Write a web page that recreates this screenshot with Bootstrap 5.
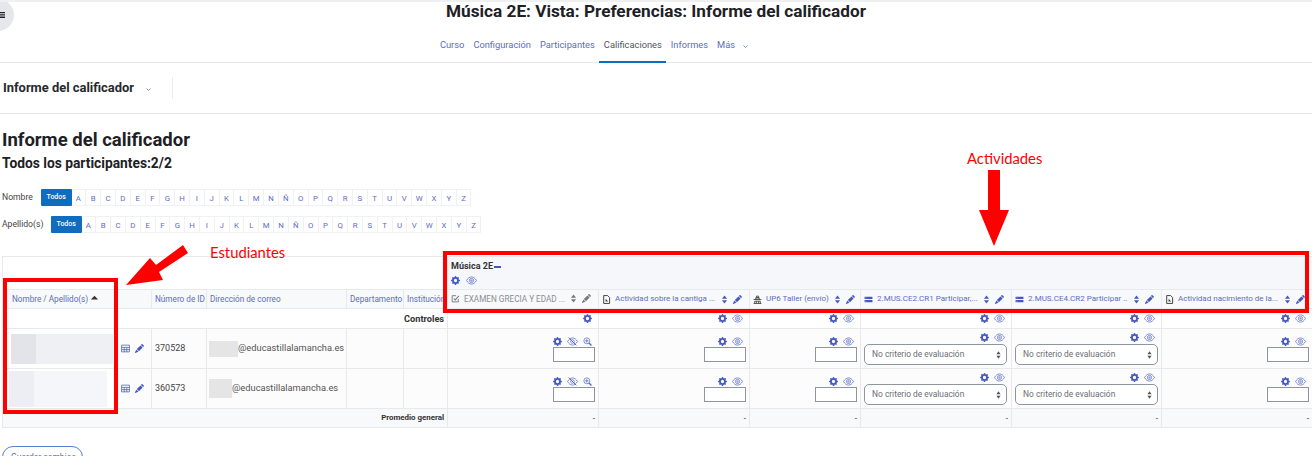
<!DOCTYPE html>
<html lang="es">
<head>
<meta charset="utf-8">
<title>Informe del calificador</title>
<link href="https://cdn.jsdelivr.net/npm/bootstrap@5.3.0/dist/css/bootstrap.min.css" rel="stylesheet">
<style>
html,body{height:456px;overflow:hidden;background:#fff}
body{font-family:Roboto,"Liberation Sans",sans-serif;color:#1d2125;border-top:2px solid #eef0f2;position:relative}
a{text-decoration:none;color:#5b6cc6}
.ic{width:9px;height:9px;fill:#4358bf;flex:none;display:block}
.ic.gy{fill:#777}
.ic.ln{fill:none;stroke:#5468c4;stroke-width:1.3}
.ic.ls{width:11px}
.menu-dot{position:absolute;left:-18px;top:-3px;width:32px;height:32px;border-radius:50%;background:#e6e7ea}
.menu-bars{position:absolute;left:0;top:10px;width:5px;height:6px;fill:#222}
.top-title{height:34px;font-size:17.2px;font-weight:700;line-height:19px;margin:0}
.tabs-wrap{height:27px;border-bottom:1px solid #e6e8ea;font-size:9px}
.tabs-wrap .nav{padding-right:124px}
.tabs-wrap .nav-link{padding:0 4.5px;height:27px;line-height:18px;color:#5b6cc6;font-size:9.3px;border-bottom:2px solid transparent;margin:0}
.tabs-wrap .nav-link.active{color:#4f5660;border-bottom-color:#0f6cbf;padding:0 4.5px}
.chev{width:5px;height:5px;stroke:#5b6cc6;fill:none;stroke-width:1.6;margin-left:8px}
.tert{height:51px;border-bottom:1px solid #e6e8ea;padding-left:3px}
.tert-t{font-size:12.9px;font-weight:700;color:#26292c}
.tert-c{width:5px;height:5px;stroke:#5b6cc6;fill:none;stroke-width:1.6;margin:2px 0 0 12px}
.tert-d{width:1px;height:22px;background:#e9ebee;margin-left:21px}
.head-a{font-size:18.5px;font-weight:700;line-height:22px;margin:15px 0 0 2px}
.head-b{font-size:13.8px;font-weight:700;line-height:16px;margin:4px 0 0 2px}
.ini{height:17px;margin-left:2px;font-size:8.6px;color:#444}
.ini-1{margin-top:18px}
.ini-2{margin-top:10px}
.ini-l{width:39px}
.ini-w{width:49px}
.ini a{display:block;width:14.82px;height:17px;line-height:17px;text-align:center;font-size:7.8px;border:1px solid #f0f1f3;border-left:0;color:#5b6cc6}
.ini a.on{width:30.5px;background:#0f6cbf;color:#fff;border:0;border-radius:1px;font-weight:500;font-size:7px}
.gr{width:1310px;margin:23px 0 0 2px;table-layout:fixed;border-collapse:collapse;font-size:8.2px;color:#444}
.gr td,.gr th{border:1px solid #e8e9eb;padding:0 3px;font-weight:400;vertical-align:middle;background:#fff;white-space:nowrap;overflow:hidden}
.r-top{height:33px}.r-hd{height:19px}.r-ct{height:20px}.r-st{height:40px}.r-av{height:19px}
.gr .r-top .cat{background:#f6f7fb;padding:0 0 0 3px;vertical-align:top}
.cat-t{font-size:9px;font-weight:700;color:#333;line-height:11px;margin-top:4px;display:flex;align-items:center;gap:1px}
.cat-m{width:7px;height:2px;background:#4358bf}
.cat-i{margin-top:4px;gap:6px}
.gr .r-hd td,.gr .r-hd th{background:#f8f9fa}
.gr .r-st td,.gr .r-st th{background:#fcfcfc}
.gr .r-st .who{background:#fff;padding:0}
.gr .r-av td,.gr .r-av th{background:#f8f9fa}
.fl{display:flex;align-items:center;gap:4px;padding-right:4px;font-size:8px}
.fl a{overflow:hidden;flex:1 1 auto;min-width:0}
.fl-n{font-size:8.2px;padding:0 0 0 6px;gap:2px}
.fl-n a{flex:0 0 auto}
.fl-u{padding-right:2px}
.mut{color:#8a8d92;flex:1 1 auto;font-size:8.2px}
.ctl{font-weight:700!important;font-size:9.2px;color:#333!important}
.avg{font-weight:700!important;font-size:7.9px;color:#333!important}
.icons{display:flex;justify-content:flex-end;gap:5px;height:11px;align-items:center;padding-right:3px}
.tools{display:flex;gap:5px}
.num{font-size:9px;color:#444}
.mail{font-size:9.3px;color:#555;padding-left:2px!important}
.blk{display:inline-block;vertical-align:middle;background:#e5e5e5}
.blk-a{width:29px;height:16px}.blk-b{width:23px;height:19px}
.nm{display:flex;margin-left:8px}
.nm span:first-child{background:#e2e4e9}
.nm span:last-child{background:#eef0f4}
.nm-a{height:30px}.nm-a span:first-child{width:25px}.nm-a span:last-child{width:77px}
.nm-b{height:36px;margin-left:6px}.nm-b span:first-child{width:25px;background:#edeef3}.nm-b span:last-child{width:73px;background:#f5f6fa}
.inbox{display:block;margin:0 0 0 auto;width:42px;height:15px;border:1px solid #8f959e;background:#fff;padding:0;border-radius:0}
.pick{height:21px;min-height:0;font-size:8.4px;padding:0 0 0 7px;border:1px solid #8f959e;border-radius:5px;color:#6a6e73;width:143px;margin-top:1px;background-size:5px 8px;background-position:right 5px center;background-image:url("data:image/svg+xml,%3Csvg xmlns='http://www.w3.org/2000/svg' viewBox='0 0 6 9'%3E%3Cpath fill='%23555' d='M3 0l2.5 3.5h-5zM3 9L.5 5.5h5z'/%3E%3C/svg%3E")}
.go{margin:18px 0 0 2px;font-size:8.5px;padding:3px 8px;height:22px;line-height:14px;border:1px solid #5b7fc6;color:#5b6cc6;border-radius:11px;width:81px;white-space:nowrap;background:#fff}
.redbox{position:absolute;border:4px solid #f00;pointer-events:none}
.rb-a{left:3px;top:276px;width:115px;height:136px}
.rb-b{left:443px;top:249px;width:866px;height:62px}
.arrows{position:absolute;left:0;top:-2px;width:1312px;height:456px;pointer-events:none;fill:#f00}
.tag{position:absolute;color:#f00;font-family:Lato,"Liberation Sans",sans-serif;font-size:14.8px;line-height:18px}
.tg-a{left:967px;top:147px}
.tg-b{left:210px;top:241px}
</style>
</head>
<body>
<svg width="0" height="0" class="position-absolute">
<defs>
<symbol id="gear" viewBox="0 0 16 16"><path d="M9.405 1.05c-.413-1.4-2.397-1.4-2.81 0l-.1.34a1.464 1.464 0 0 1-2.105.872l-.31-.17c-1.283-.698-2.686.705-1.987 1.987l.169.311c.446.82.023 1.841-.872 2.105l-.34.1c-1.4.413-1.4 2.397 0 2.81l.34.1a1.464 1.464 0 0 1 .872 2.105l-.17.31c-.698 1.283.705 2.686 1.987 1.987l.311-.169a1.464 1.464 0 0 1 2.105.872l.1.34c.413 1.4 2.397 1.4 2.81 0l.1-.34a1.464 1.464 0 0 1 2.105-.872l.31.17c1.283.698 2.686-.705 1.987-1.987l-.169-.311a1.464 1.464 0 0 1 .872-2.105l.34-.1c1.4-.413 1.4-2.397 0-2.81l-.34-.1a1.464 1.464 0 0 1-.872-2.105l.17-.31c.698-1.283-.705-2.686-1.987-1.987l-.311.169a1.464 1.464 0 0 1-2.105-.872l-.1-.34zM8 10.93a2.929 2.929 0 1 1 0-5.86 2.929 2.929 0 0 1 0 5.858z"/></symbol>
<symbol id="eye" viewBox="0 0 20 16"><path d="M1 8c2.500-4.500 5.500-6.500 9-6.500s6.500 2 9 6.500c-2.500 4.500-5.500 6.500-9 6.500S3.500 12.500 1 8z"/><circle cx="10" cy="8" r="3.800"/><circle cx="10" cy="8" r="1.200"/></symbol>
<symbol id="eyeoff" viewBox="0 0 20 16"><path d="M1 8c2.500-4.500 5.500-6.500 9-6.500s6.500 2 9 6.500c-2.500 4.500-5.500 6.500-9 6.500S3.500 12.500 1 8z"/><circle cx="10" cy="8" r="3.300"/><path d="M3 1l14 14" stroke-width="1.800"/></symbol>
<symbol id="zoomin" viewBox="0 0 16 16"><circle cx="6.800" cy="6.800" r="5.300"/><path d="M10.700 10.700L15 15" stroke-width="2.400"/><path d="M4 6.800h5.600M6.800 4v5.600" stroke-width="1.500"/></symbol>
<symbol id="pen" viewBox="0 0 16 16"><path d="M12.854.146a.5.5 0 0 0-.707 0L10.500 1.793 14.207 5.500l1.647-1.646a.5.5 0 0 0 0-.708l-3-3zm.646 6.061L9.793 2.500 3.293 9H3.500a.5.5 0 0 1 .5.500v.500h.500a.5.5 0 0 1 .5.500v.500h.500a.5.5 0 0 1 .5.500v.500h.500a.5.5 0 0 1 .5.500v.207l6.500-6.500zm-7.468 7.468A.5.5 0 0 1 6 13.500V13h-.500a.5.5 0 0 1-.5-.500V12h-.500a.5.5 0 0 1-.5-.500V11h-.500a.5.5 0 0 1-.5-.500V10h-.500a.499.499 0 0 1-.175-.032l-.179.178a.5.5 0 0 0-.11.168l-2 5a.5.5 0 0 0 .65.65l5-2a.5.5 0 0 0 .168-.11l.178-.178z"/></symbol>
<symbol id="sort" viewBox="0 0 10 16"><path d="M5 1l4.500 5.500h-9zM5 15L.5 9.500h9z"/></symbol>
<symbol id="grid" viewBox="0 0 16 16"><path d="M1 2h14v12H1zM1 6h14M1 10h14M5.700 6v8M10.300 6v8" fill="none" stroke="#4358bf" stroke-width="1.300"/></symbol>
<symbol id="quiz" viewBox="0 0 16 16"><path d="M13 9v5H2V3h7" fill="none" stroke="#777" stroke-width="1.600"/><path d="M5 8l2.500 2.500L14 3.500" fill="none" stroke="#777" stroke-width="1.800"/></symbol>
<symbol id="file" viewBox="0 0 16 16"><path d="M3 1h7l3.500 3.500V15H3z" fill="none" stroke="#333" stroke-width="1.600"/><path d="M6.500 6.500v6l1.800-1.500 3 1z" fill="#333"/></symbol>
<symbol id="work" viewBox="0 0 16 16"><path d="M1 15h14M3 15v-4h10v4M1 8h14M5 8V5h6v3M6 2h4v3H6zM6 11v4M10 11v4" fill="none" stroke="#333" stroke-width="1.400"/></symbol>
<symbol id="srv" viewBox="0 0 16 16"><path d="M1 3h14v4.300H1zM1 8.700h14V13H1z" fill="#4358bf"/><circle cx="3.500" cy="5.100" r=".8" fill="#fff"/><circle cx="3.500" cy="10.900" r=".8" fill="#fff"/></symbol>
</defs>
</svg>

<div class="menu-dot"></div>
<svg class="menu-bars" viewBox="0 0 5 6"><path d="M0 0h5v1H0zM0 1.700h5v1H0zM0 3.400h5v1H0zM0 5h5v1H0z"/></svg>

<h1 class="top-title text-center">Música 2E: Vista: Preferencias: Informe del calificador</h1>
<div class="tabs-wrap">
<ul class="nav justify-content-center">
<li class="nav-item"><a class="nav-link" href="#">Curso</a></li>
<li class="nav-item"><a class="nav-link" href="#">Configuración</a></li>
<li class="nav-item"><a class="nav-link" href="#">Participantes</a></li>
<li class="nav-item"><a class="nav-link active" href="#">Calificaciones</a></li>
<li class="nav-item"><a class="nav-link" href="#">Informes</a></li>
<li class="nav-item"><a class="nav-link d-flex align-items-start" href="#">Más<svg class="chev mt-2" viewBox="0 0 10 10"><path d="M1 3l4 4 4-4"/></svg></a></li>
</ul>
</div>
<div class="tert d-flex align-items-center">
<span class="tert-t">Informe del calificador</span>
<svg class="tert-c" viewBox="0 0 10 10"><path d="M1 3l4 4 4-4"/></svg>
<span class="tert-d"></span>
</div>
<h2 class="head-a">Informe del calificador</h2>
<h3 class="head-b">Todos los participantes:2/2</h3>

<div class="ini ini-1 d-flex align-items-center"><span class="ini-l">Nombre</span><a class="on" href="#">Todos</a><a href="#">A</a><a href="#">B</a><a href="#">C</a><a href="#">D</a><a href="#">E</a><a href="#">F</a><a href="#">G</a><a href="#">H</a><a href="#">I</a><a href="#">J</a><a href="#">K</a><a href="#">L</a><a href="#">M</a><a href="#">N</a><a href="#">Ñ</a><a href="#">O</a><a href="#">P</a><a href="#">Q</a><a href="#">R</a><a href="#">S</a><a href="#">T</a><a href="#">U</a><a href="#">V</a><a href="#">W</a><a href="#">X</a><a href="#">Y</a><a href="#">Z</a></div>
<div class="ini ini-2 d-flex align-items-center"><span class="ini-w">Apellido(s)</span><a class="on" href="#">Todos</a><a href="#">A</a><a href="#">B</a><a href="#">C</a><a href="#">D</a><a href="#">E</a><a href="#">F</a><a href="#">G</a><a href="#">H</a><a href="#">I</a><a href="#">J</a><a href="#">K</a><a href="#">L</a><a href="#">M</a><a href="#">N</a><a href="#">Ñ</a><a href="#">O</a><a href="#">P</a><a href="#">Q</a><a href="#">R</a><a href="#">S</a><a href="#">T</a><a href="#">U</a><a href="#">V</a><a href="#">W</a><a href="#">X</a><a href="#">Y</a><a href="#">Z</a></div>

<table class="gr">
<colgroup><col width="115"><col width="34"><col width="55"><col width="140"><col width="57"><col width="44"><col width="151"><col width="151"><col width="111"><col width="151"><col width="150"><col width="151"></colgroup>
<tr class="r-top"><td colspan="6"></td><td colspan="6" class="cat"><div class="cat-t">Música 2E<span class="cat-m"></span></div><div class="d-flex cat-i"><svg class="ic"><use href="#gear"/></svg><svg class="ic ln ls"><use href="#eye"/></svg></div></td></tr>
<tr class="r-hd">
<th><div class="fl fl-n"><a href="#">Nombre / Apellido(s)</a><svg class="ic" viewBox="0 0 10 10"><path d="M5 2l4 4H1z" fill="#333"/></svg></div></th><th></th><th><a href="#">Número de ID</a></th><th><a href="#">Dirección de correo</a></th><th><a href="#">Departamento</a></th><th><a href="#">Institución</a></th>
<th><div class="fl"><svg class="ic"><use href="#quiz"/></svg><span class="mut">EXAMEN GRECIA Y EDAD ...</span><svg class="ic gy"><use href="#sort"/></svg><svg class="ic gy"><use href="#pen"/></svg></div></th>
<th><div class="fl"><svg class="ic"><use href="#file"/></svg><a href="#">Actividad sobre la cantiga ...</a><svg class="ic"><use href="#sort"/></svg><svg class="ic"><use href="#pen"/></svg></div></th>
<th><div class="fl fl-u"><svg class="ic"><use href="#work"/></svg><a href="#">UP6 Taller (envío)</a><svg class="ic"><use href="#sort"/></svg><svg class="ic"><use href="#pen"/></svg></div></th>
<th><div class="fl"><svg class="ic"><use href="#srv"/></svg><a href="#">2.MUS.CE2.CR1 Participar,...</a><svg class="ic"><use href="#sort"/></svg><svg class="ic"><use href="#pen"/></svg></div></th>
<th><div class="fl"><svg class="ic"><use href="#srv"/></svg><a href="#">2.MUS.CE4.CR2 Participar ...</a><svg class="ic"><use href="#sort"/></svg><svg class="ic"><use href="#pen"/></svg></div></th>
<th><div class="fl"><svg class="ic"><use href="#file"/></svg><a href="#">Actividad nacimiento de la...</a><svg class="ic"><use href="#sort"/></svg><svg class="ic"><use href="#pen"/></svg></div></th>
</tr>
<tr class="r-ct"><td colspan="6" class="text-end ctl">Controles</td>
<td><div class="icons"><svg class="ic"><use href="#gear"/></svg></div></td>
<td><div class="icons"><svg class="ic"><use href="#gear"/></svg><svg class="ic ln ls"><use href="#eye"/></svg></div></td>
<td><div class="icons"><svg class="ic"><use href="#gear"/></svg><svg class="ic ln ls"><use href="#eye"/></svg></div></td>
<td><div class="icons"><svg class="ic"><use href="#gear"/></svg><svg class="ic ln ls"><use href="#eye"/></svg></div></td>
<td><div class="icons"><svg class="ic"><use href="#gear"/></svg><svg class="ic ln ls"><use href="#eye"/></svg></div></td>
<td><div class="icons"><svg class="ic"><use href="#gear"/></svg><svg class="ic ln ls"><use href="#eye"/></svg></div></td>
</tr>
<tr class="r-st">
<td class="who"><div class="nm nm-a"><span></span><span></span></div></td>
<td><div class="tools"><svg class="ic"><use href="#grid"/></svg><svg class="ic"><use href="#pen"/></svg></div></td>
<td class="num">370528</td><td class="mail"><span class="blk blk-a"></span>@educastillalamancha.es</td><td></td><td></td>
<td><div class="icons"><svg class="ic"><use href="#gear"/></svg><svg class="ic ln ls"><use href="#eyeoff"/></svg><svg class="ic ln"><use href="#zoomin"/></svg></div><input class="inbox" type="text" aria-label="Nota"></td>
<td><div class="icons"><svg class="ic"><use href="#gear"/></svg><svg class="ic ln ls"><use href="#eye"/></svg></div><input class="inbox" type="text" aria-label="Nota"></td>
<td><div class="icons"><svg class="ic"><use href="#gear"/></svg><svg class="ic ln ls"><use href="#eye"/></svg></div><input class="inbox" type="text" aria-label="Nota"></td>
<td><div class="icons"><svg class="ic"><use href="#gear"/></svg><svg class="ic ln ls"><use href="#eye"/></svg></div><select class="form-select pick" aria-label="Criterio"><option>No criterio de evaluación</option></select></td>
<td><div class="icons"><svg class="ic"><use href="#gear"/></svg><svg class="ic ln ls"><use href="#eye"/></svg></div><select class="form-select pick" aria-label="Criterio"><option>No criterio de evaluación</option></select></td>
<td><div class="icons"><svg class="ic"><use href="#gear"/></svg><svg class="ic ln ls"><use href="#eye"/></svg></div><input class="inbox" type="text" aria-label="Nota"></td>
</tr>
<tr class="r-st">
<td class="who"><div class="nm nm-b"><span></span><span></span></div></td>
<td><div class="tools"><svg class="ic"><use href="#grid"/></svg><svg class="ic"><use href="#pen"/></svg></div></td>
<td class="num">360573</td><td class="mail"><span class="blk blk-b"></span>@educastillalamancha.es</td><td></td><td></td>
<td><div class="icons"><svg class="ic"><use href="#gear"/></svg><svg class="ic ln ls"><use href="#eyeoff"/></svg><svg class="ic ln"><use href="#zoomin"/></svg></div><input class="inbox" type="text" aria-label="Nota"></td>
<td><div class="icons"><svg class="ic"><use href="#gear"/></svg><svg class="ic ln ls"><use href="#eye"/></svg></div><input class="inbox" type="text" aria-label="Nota"></td>
<td><div class="icons"><svg class="ic"><use href="#gear"/></svg><svg class="ic ln ls"><use href="#eye"/></svg></div><input class="inbox" type="text" aria-label="Nota"></td>
<td><div class="icons"><svg class="ic"><use href="#gear"/></svg><svg class="ic ln ls"><use href="#eye"/></svg></div><select class="form-select pick" aria-label="Criterio"><option>No criterio de evaluación</option></select></td>
<td><div class="icons"><svg class="ic"><use href="#gear"/></svg><svg class="ic ln ls"><use href="#eye"/></svg></div><select class="form-select pick" aria-label="Criterio"><option>No criterio de evaluación</option></select></td>
<td><div class="icons"><svg class="ic"><use href="#gear"/></svg><svg class="ic ln ls"><use href="#eye"/></svg></div><input class="inbox" type="text" aria-label="Nota"></td>
</tr>
<tr class="r-av"><td colspan="6" class="text-end avg">Promedio general</td><td class="text-end">-</td><td class="text-end">-</td><td class="text-end">-</td><td class="text-end">-</td><td class="text-end">-</td><td class="text-end">-</td></tr>
</table>
<button class="btn btn-outline-primary go" type="button">Guardar cambios</button>

<div class="redbox rb-a"></div>
<div class="redbox rb-b"></div>
<svg class="arrows" viewBox="0 0 1312 456"><path d="M988 170h12v40h9l-15 36-15-36h9zM183 245l5 8-29 19 4 8-37 5 24-27 6 7z"/></svg>
<div class="tag tg-a">Actividades</div>
<div class="tag tg-b">Estudiantes</div>
<script src="https://cdn.jsdelivr.net/npm/bootstrap@5.3.0/dist/js/bootstrap.bundle.min.js"></script>
</body>
</html>
